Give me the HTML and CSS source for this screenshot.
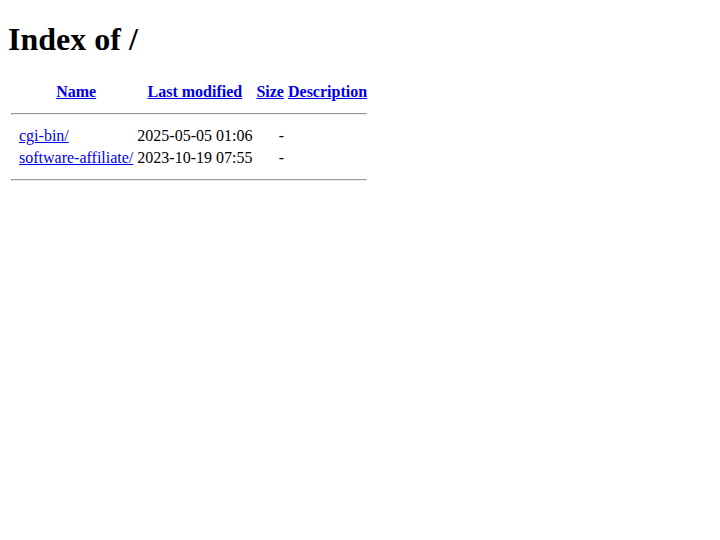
FILE: index.html
```
<!DOCTYPE html>
<html>
<head>
<title>Index of /</title>
<link rel="stylesheet" href="styles.css">
</head>
<body>
<h1 class="title">Index of /</h1>
<table class="listing">
<tr><th class="ico">&nbsp;</th><th><a href="?C=N;O=D">Name</a></th><th><a href="?C=M;O=A">Last modified</a></th><th><a href="?C=S;O=A">Size</a></th><th><a href="?C=D;O=A">Description</a></th></tr>
<tr><th colspan="5"><hr></th></tr>
<tr><td class="ico">&nbsp;</td><td><a href="cgi-bin/">cgi-bin/</a></td><td class="num">2025-05-05 01:06  </td><td class="num">  - </td><td>&nbsp;</td></tr>
<tr><td class="ico">&nbsp;</td><td><a href="software-affiliate/">software-affiliate/</a></td><td class="num">2023-10-19 07:55  </td><td class="num">  - </td><td>&nbsp;</td></tr>
<tr><th colspan="5"><hr></th></tr>
</table>
</body>
</html>
```
FILE: styles.css
```
body {
  font-family: "Liberation Serif", "Times New Roman", serif;
  font-size: 16px;
  color: #000;
  background: #fff;
}
.title {
  margin-top: 13.44px;
}
.listing .ico {
  vertical-align: top;
}
.listing .num {
  text-align: right;
}
```
